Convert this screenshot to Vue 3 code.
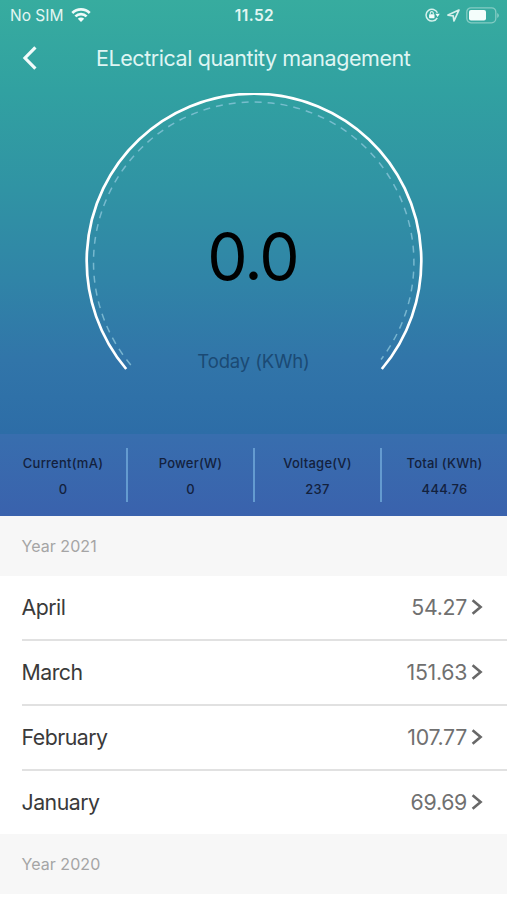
<template>
  <div class="page">
    <div class="header">
      <div class="status-bar">
        <div class="status-left">
          <span class="carrier">No SIM</span>
          <svg class="wifi" width="20" height="16" viewBox="0 0 20 16">
            <path d="M1.3 6a12.4 12.4 0 0 1 17.4 0" />
            <path d="M4.4 9.4a8 8 0 0 1 11.2 0" />
            <path class="solid" d="M10 15L6.8 11.8a4.6 4.6 0 0 1 6.4 0z" />
          </svg>
        </div>
        <span class="clock">11.52</span>
        <div class="status-right">
          <svg class="lock" width="15" height="14" viewBox="0 0 15 14">
            <path d="M12.2 9.8A5.9 5.9 0 1 1 12.4 4.8" />
            <path class="solid" d="M10.4 5.8h4.4l-2.2 3.2z" />
            <rect class="solid" x="4.1" y="6.2" width="5.4" height="4" rx="0.6" />
            <path class="shackle" d="M5.3 6.4V5.1a1.5 1.5 0 0 1 3 0v1.3" />
          </svg>
          <svg class="location" width="13" height="13" viewBox="0 0 13 13">
            <path d="M11.9 1.1L1 6.1l5.2.7.8 5.2z" />
          </svg>
          <svg class="battery" width="33" height="17" viewBox="0 0 33 17">
            <rect class="shell" x="0.8" y="0.8" width="29" height="15" rx="4.2" />
            <rect class="solid" x="3" y="3" width="17" height="10.6" rx="2" />
            <path class="cap" d="M31.2 6v5a2.7 2.7 0 0 0 0-5z" />
          </svg>
        </div>
      </div>

      <div class="nav-bar">
        <svg class="back" width="16" height="26" viewBox="0 0 16 26">
          <path d="M14.4 2.4L4 13l10.4 10.6" />
        </svg>
        <h1 class="title">ELectrical quantity management</h1>
      </div>

      <div class="gauge">
        <svg class="gauge-arc" width="340" height="290" viewBox="0 0 340 290">
          <path class="arc-line" d="M42.2 276A167.3 167.3 0 1 1 297.8 276" />
          <path class="arc-dash" d="M46.8 272A160.2 160.2 0 1 1 297 266.5" />
        </svg>
        <div class="gauge-text">
          <div class="gauge-value">0.0</div>
          <div class="gauge-label">Today (KWh)</div>
        </div>
      </div>

      <div class="stats">
        <div v-for="item in stats" :key="item.label" class="stat">
          <div class="stat-label">{{ item.label }}</div>
          <div class="stat-value">{{ item.value }}</div>
        </div>
      </div>
    </div>

    <div v-for="group in years" :key="group.year" class="group">
      <div class="year">Year {{ group.year }}</div>
      <div v-for="row in group.months" :key="row.name" class="row">
        <span class="month">{{ row.name }}</span>
        <span class="amount">{{ row.amount }}</span>
        <svg class="arrow" width="12" height="18" viewBox="0 0 12 18">
          <path d="M1.6 2.2L9.6 9l-8 6.8" />
        </svg>
      </div>
    </div>
  </div>
</template>

<script setup>
import { ref } from 'vue';

const stats = ref([
  { label: 'Current(mA)', value: '0' },
  { label: 'Power(W)', value: '0' },
  { label: 'Voltage(V)', value: '237' },
  { label: 'Total (KWh)', value: '444.76' },
]);

const years = ref([
  {
    year: 2021,
    months: [
      { name: 'April', amount: '54.27' },
      { name: 'March', amount: '151.63' },
      { name: 'February', amount: '107.77' },
      { name: 'January', amount: '69.69' },
    ],
  },
  { year: 2020, months: [] },
]);
</script>

<style>
body {
  margin: 0;
  background: #fff;
}
</style>

<style scoped>
.page {
  width: 507px;
  height: 900px;
  overflow: hidden;
  background: #fff;
  font-family: Inter, "Liberation Sans", sans-serif;
}
svg {
  display: block;
  flex: none;
  fill: none;
}
.header {
  height: 516px;
  display: flex;
  flex-direction: column;
  background: linear-gradient(#37ac9f 0, #31a1a1 90px, #3093a4 190px, #3084a7 280px, #3175a9 360px, #2d6da7 434px);
}
.status-bar {
  height: 30px;
  display: grid;
  grid-template-columns: 1fr auto 1fr;
  align-items: center;
  padding: 0 8px 0 10px;
  color: #e3f6f2;
}
.carrier {
  font-size: 15.5px;
}
.status-left,
.status-right {
  display: flex;
  align-items: center;
}
.status-right {
  justify-content: flex-end;
}
.wifi {
  margin-left: 8px;
  stroke: #eefaf8;
  stroke-width: 2.7;
}
.solid {
  fill: #f4fdfb;
  stroke: none;
}
.clock {
  font-weight: 600;
  font-size: 15.5px;
  letter-spacing: 0.4px;
}
.lock {
  stroke: #d6f1ec;
  stroke-width: 1.5;
}
.shackle {
  stroke-width: 1.1;
}
.location {
  margin-left: 7px;
  margin-right: 1px;
  stroke: #d6f1ec;
  stroke-width: 1.7;
  stroke-linejoin: round;
}
.battery {
  margin-left: 5px;
}
.shell {
  stroke: #84ccc4;
  stroke-width: 1.3;
}
.cap {
  fill: #84ccc4;
}
.nav-bar {
  height: 56px;
  display: flex;
  align-items: center;
  padding-left: 21px;
}
.back {
  stroke: #f2fbfb;
  stroke-width: 3.2;
}
.title {
  margin: 0 0 0 59px;
  color: #dff5f3;
  font-size: 21.5px;
  font-weight: 400;
  letter-spacing: -0.43px;
  white-space: nowrap;
}
.gauge {
  height: 348px;
  display: grid;
  justify-content: center;
}
.gauge-arc,
.gauge-text {
  grid-area: 1 / 1;
}
.gauge-arc {
  margin-top: 7px;
}
.arc-line {
  stroke: #fff;
  stroke-width: 2.7;
}
.arc-dash {
  stroke: #8fc8dc;
  stroke-opacity: 0.75;
  stroke-width: 1.5;
  stroke-dasharray: 7 6;
}
.gauge-text {
  text-align: center;
}
.gauge-value {
  margin-top: 131px;
  color: #000;
  font-size: 64px;
  line-height: 80px;
  letter-spacing: -1.8px;
  text-indent: -1.8px;
}
.gauge-label {
  margin-top: 52px;
  color: #1b4a74;
  font-size: 18.5px;
  line-height: 24px;
  letter-spacing: -0.12px;
}
.stats {
  height: 82px;
  display: grid;
  grid-template-columns: 128px 127px 127px 125px;
  align-items: center;
  background: linear-gradient(#386eae, #3a62ad);
}
.stat {
  height: 54px;
  box-sizing: border-box;
  padding-top: 5px;
  border-right: 2px solid #649bd0;
  color: #13213d;
  font-size: 13px;
  font-weight: 500;
  text-align: center;
  letter-spacing: 0.25px;
}
.stat:last-child {
  border-right: none;
}
.stat-label,
.stat-value {
  line-height: 20px;
}
.stat-value {
  margin-top: 6px;
}
.year {
  height: 60px;
  padding-left: 21.5px;
  background: #f7f7f7;
  color: #a5a5a5;
  font-size: 16px;
  line-height: 61px;
  letter-spacing: 0.05px;
}
.row {
  height: 65px;
  box-sizing: border-box;
  display: flex;
  align-items: center;
  margin-left: 21.5px;
  padding-right: 24px;
  padding-bottom: 2px;
  border-bottom: 2px solid #e1e1e1;
}
.row:last-child {
  height: 63px;
  border-bottom: none;
}
.month {
  flex: 1;
  color: #3a3a3a;
  font-size: 21.3px;
  letter-spacing: -0.5px;
}
.amount {
  color: #707070;
  font-size: 21.3px;
  letter-spacing: -0.3px;
}
.arrow {
  margin-left: 4px;
  stroke: #686868;
  stroke-width: 2.6;
}
</style>
